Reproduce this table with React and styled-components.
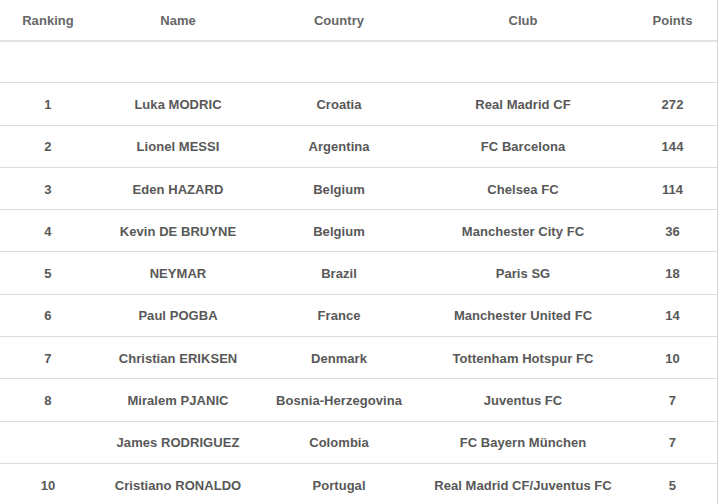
import React from "react";
import styled, { createGlobalStyle } from "styled-components";

const Global = createGlobalStyle`
  html, body { margin: 0; padding: 0; background: #fff; }
  body { font-family: "Liberation Sans", Arial, sans-serif; }
`;

const cols = "96px 164px 158px 210px 89px";

const Table = styled.div`
  width: 718px;
  border-right: 1px solid #d6d6d6;
  box-sizing: border-box;
  height: 504px;
  overflow: hidden;
`;

const Row = styled.div`
  display: grid;
  grid-template-columns: ${cols};
  align-items: center;
  box-sizing: border-box;
  height: ${(p) => p.$h}px;
  border-bottom: ${(p) => (p.$head ? "2px solid #e2e2e2" : "1px solid #dcdcdc")};
  background: #fff;
`;

const Cell = styled.div`
  text-align: center;
  font-size: 13px;
  font-weight: bold;
  color: ${(p) => (p.$head ? "#666" : "#585858")};
  white-space: nowrap;
  line-height: 16px;
  padding-top: 2px;
  letter-spacing: 0.05px;
`;

const data = [
  ["1", "Luka MODRIC", "Croatia", "Real Madrid CF", "272"],
  ["2", "Lionel MESSI", "Argentina", "FC Barcelona", "144"],
  ["3", "Eden HAZARD", "Belgium", "Chelsea FC", "114"],
  ["4", "Kevin DE BRUYNE", "Belgium", "Manchester City FC", "36"],
  ["5", "NEYMAR", "Brazil", "Paris SG", "18"],
  ["6", "Paul POGBA", "France", "Manchester United FC", "14"],
  ["7", "Christian ERIKSEN", "Denmark", "Tottenham Hotspur FC", "10"],
  ["8", "Miralem PJANIC", "Bosnia-Herzegovina", "Juventus FC", "7"],
  ["", "James RODRIGUEZ", "Colombia", "FC Bayern München", "7"],
  ["10", "Cristiano RONALDO", "Portugal", "Real Madrid CF/Juventus FC", "5"],
];

const headers = ["Ranking", "Name", "Country", "Club", "Points"];

export default function App() {
  return (
    <>
      <Global />
      <Table>
        <Row $head $h={42}>
          {headers.map((h) => (
            <Cell key={h} $head>
              {h}
            </Cell>
          ))}
        </Row>
        <Row $h={41.3} />
        {data.map((r, i) => (
          <Row key={i} $h={42.3}>
            {r.map((c, j) => (
              <Cell key={j}>{c}</Cell>
            ))}
          </Row>
        ))}
      </Table>
    </>
  );
}
